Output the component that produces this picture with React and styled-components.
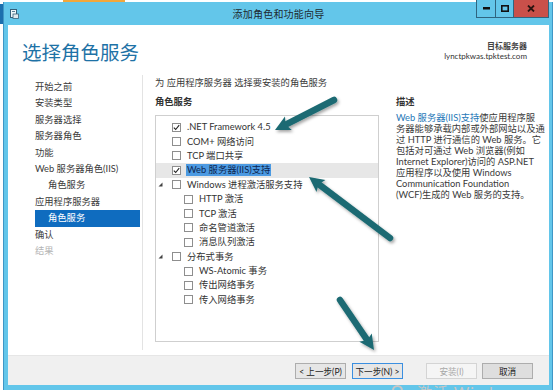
import React from "react";
import styled, { createGlobalStyle } from "styled-components";

const Global = createGlobalStyle`
  html, body { margin: 0; padding: 0; background: #fff; }
  body { overflow: hidden; }
`;

const FONT = `Lato, "Noto Sans CJK SC", sans-serif`;

const Page = styled.div`
  position: relative;
  width: 554px;
  height: 390px;
  overflow: hidden;
  background: #fff;
  display: flex;
  flex-direction: column;
  font-family: ${FONT};
  color: #333;
`;

const TopStrip = styled.div`
  height: 2px;
  display: flex;
  flex-shrink: 0;
`;

const OrangeBit = styled.div`
  margin-left: 63px;
  width: 62px;
  background: #f2a73c;
`;

const Body = styled.div`
  flex: 1;
  display: flex;
`;

const LeftEdge = styled.div`
  width: 3px;
  display: flex;
  flex-direction: column;
`;

const EdgeBlue = styled.div`
  margin-top: 2px;
  height: 20px;
  background: #1c6fae;
`;

const Window = styled.div`
  width: 550px;
  box-sizing: border-box;
  display: flex;
  flex-direction: column;
  background: #63c6ea;
  border-left: 1px solid #3f97c6;
  border-right: 1px solid #3f97c6;
  padding: 0 3px 5px 4px;
`;

const TitleBar = styled.div`
  height: 23px;
  display: grid;
  grid-template-columns: 1fr auto 1fr;
  align-items: center;
`;

const TitleIcon = styled.svg`
  margin-left: 2px;
  display: block;
`;

const TitleText = styled.div`
  font-size: 10px;
  color: #1e2a30;
  letter-spacing: 0.2px;
`;

const Controls = styled.div`
  justify-self: end;
  align-self: start;
  margin-top: -2px;
  display: flex;
  height: 17px;
  border: 1px solid #2f6580;
  border-top: none;
`;

const CtrlBtn = styled.div`
  width: ${(p) => p.$w}px;
  background: ${(p) => (p.$close ? "#c9504a" : "#63c6ea")};
  border-left: ${(p) => (p.$first ? "none" : "1px solid #2f6580")};
  display: flex;
  align-items: center;
  justify-content: center;
`;

const Content = styled.div`
  flex: 1;
  background: #fff;
  display: flex;
  flex-direction: column;
`;

const Header = styled.div`
  height: 50px;
  display: flex;
  align-items: center;
  justify-content: space-between;
  padding: 0 22px 0 14px;
`;

const HeaderTitle = styled.div`
  font-size: 19.5px;
  color: #1e72a6;
  margin-top: 3px;
`;

const Target = styled.div`
  text-align: right;
  font-size: 8px;
  line-height: 10px;
  color: #333;
  margin-top: 2px;
`;

const TargetLabel = styled.div`
  font-weight: 700;
  color: #444;
`;

const Main = styled.div`
  flex: 1;
  display: flex;
`;

const Nav = styled.div`
  width: 135px;
  box-sizing: border-box;
  border-right: 1px solid #e3e3e3;
  padding-top: 4px;
  margin-bottom: 5px;
  display: flex;
  flex-direction: column;
`;

const NavItem = styled.div`
  height: 16.4px;
  line-height: 16.4px;
  font-size: 9.3px;
  white-space: nowrap;
  margin-left: 27px;
  margin-right: 2px;
  padding-left: ${(p) => (p.$indent ? 13 : 0)}px;
  color: ${(p) => (p.$active ? "#fff" : p.$muted ? "#b4b4b4" : "#3a3a3a")};
  background: ${(p) => (p.$active ? "#0f6cbf" : "transparent")};
`;

const Panel = styled.div`
  flex: 1;
  padding-left: 12px;
  display: flex;
  flex-direction: column;
`;

const Intro = styled.div`
  height: 14px;
  line-height: 14px;
  margin-top: 1px;
  font-size: 9.3px;
  color: #3a3a3a;
  white-space: nowrap;
`;

const Columns = styled.div`
  flex: 1;
  display: flex;
  margin-top: 5px;
`;

const ListColumn = styled.div`
  width: 224px;
  display: flex;
  flex-direction: column;
`;

const SectionLabel = styled.div`
  height: 14px;
  line-height: 14px;
  font-size: 9.3px;
  font-weight: 700;
  color: #333;
`;

const ListBox = styled.div`
  margin-top: 6px;
  height: 227px;
  box-sizing: border-box;
  border: 1px solid #cfcfcf;
  padding-top: 4px;
`;

const Row = styled.div`
  height: 14.4px;
  display: flex;
  align-items: center;
  background: ${(p) => (p.$selected ? "#e7e7e7" : "transparent")};
  white-space: nowrap;
`;

const Expander = styled.div`
  width: 16px;
  flex-shrink: 0;
  display: flex;
  align-items: center;
  padding-left: 2px;
  box-sizing: border-box;
`;

const Indent = styled.div`
  width: ${(p) => p.$w}px;
  flex-shrink: 0;
`;

const Box = styled.div`
  width: 9px;
  height: 9px;
  box-sizing: border-box;
  border: 1px solid #8e8e8e;
  background: #fff;
  display: flex;
  align-items: center;
  justify-content: center;
  flex-shrink: 0;
`;

const Label = styled.span`
  margin-left: 5px;
  font-size: 9.3px;
  line-height: 12px;
  padding: 0 1px;
  color: ${(p) => (p.$selected ? "#0c2650" : "#333")};
  background: ${(p) => (p.$selected ? "#4c9ae2" : "transparent")};
`;

const DescColumn = styled.div`
  margin-left: 17px;
  width: 142px;
  display: flex;
  flex-direction: column;
`;

const DescText = styled.div`
  margin-top: 3px;
  font-size: 9.3px;
  line-height: 11px;
  color: #3a3a3a;
`;

const DescLine = styled.div`
  white-space: nowrap;
`;

const Link = styled.span`
  color: #1f78b8;
`;

const Footer = styled.div`
  height: 30px;
  box-sizing: border-box;
  background: #f0f0f0;
  border-top: 1px solid #e6e6e6;
  display: flex;
  align-items: center;
  justify-content: flex-end;
  padding-right: 16px;
`;

const Button = styled.div`
  width: 51px;
  height: 16px;
  box-sizing: border-box;
  margin-left: ${(p) => p.$gap}px;
  margin-top: 1px;
  border: 1px solid ${(p) => (p.$default ? "#3b8fe0" : p.$disabled ? "#d4d4d4" : "#adadad")};
  background: ${(p) => (p.$disabled ? "#f5f5f5" : p.$cancel ? "#dedede" : "#e6e6e6")};
  color: ${(p) => (p.$disabled ? "#a8a8a8" : "#222")};
  font-size: 8.6px;
  display: flex;
  align-items: center;
  justify-content: center;
  white-space: nowrap;
`;

const Overlay = styled.svg`
  position: absolute;
  left: 0;
  top: 0;
  pointer-events: none;
`;

const Watermark = styled.div`
  position: absolute;
  left: 417px;
  top: 381px;
  font-size: 15px;
  color: #c6c6c6;
  white-space: nowrap;
  letter-spacing: 1px;
`;

const WatermarkRing = styled.div`
  position: absolute;
  left: 392px;
  top: 385px;
  width: 11px;
  height: 11px;
  border: 2px solid #c6c6c6;
  border-radius: 50%;
  box-sizing: border-box;
`;

const Check = () => (
  <svg width="7" height="7" viewBox="0 0 7 7">
    <path d="M0.8 3.6 L2.7 5.5 L6.2 1.2" fill="none" stroke="#222" strokeWidth="1.1" />
  </svg>
);

const Tri = () => (
  <svg width="5" height="5" viewBox="0 0 5 5" style={{ display: "block" }}>
    <polygon points="4.5,0.5 4.5,4.5 0.5,4.5" fill="#444" />
  </svg>
);

const rows = [
  { label: ".NET Framework 4.5", level: 0, checked: true },
  { label: "COM+ 网络访问", level: 0 },
  { label: "TCP 端口共享", level: 0 },
  { label: "Web 服务器(IIS)支持", level: 0, checked: true, selected: true },
  { label: "Windows 进程激活服务支持", level: 0, expand: true },
  { label: "HTTP 激活", level: 1 },
  { label: "TCP 激活", level: 1 },
  { label: "命名管道激活", level: 1 },
  { label: "消息队列激活", level: 1 },
  { label: "分布式事务", level: 0, expand: true },
  { label: "WS-Atomic 事务", level: 1 },
  { label: "传出网络事务", level: 1 },
  { label: "传入网络事务", level: 1 },
];

const navItems = [
  { t: "开始之前" },
  { t: "安装类型" },
  { t: "服务器选择" },
  { t: "服务器角色" },
  { t: "功能" },
  { t: "Web 服务器角色(IIS)" },
  { t: "角色服务", indent: true },
  { t: "应用程序服务器" },
  { t: "角色服务", indent: true, active: true },
  { t: "确认" },
  { t: "结果", muted: true },
];

function Arrow({ x1, y1, x2, y2 }) {
  const dx = x2 - x1;
  const dy = y2 - y1;
  const len = Math.hypot(dx, dy);
  const ux = dx / len;
  const uy = dy / len;
  const hl = 15;
  const hw = 7.5;
  const bx = x2 - ux * hl;
  const by = y2 - uy * hl;
  const px = -uy;
  const py = ux;
  const pts = `${x2},${y2} ${bx + px * hw},${by + py * hw} ${bx + ux * 3},${by + uy * 3} ${bx - px * hw},${by - py * hw}`;
  return (
    <g filter="url(#sh)">
      <line x1={x1} y1={y1} x2={bx + ux * 3} y2={by + uy * 3} stroke="#1d6b73" strokeWidth="6.5" strokeLinecap="round" />
      <polygon points={pts} fill="#1d6b73" />
    </g>
  );
}

export default function App() {
  return (
    <>
      <Global />
      <Page>
        <TopStrip>
          <OrangeBit />
        </TopStrip>
        <Body>
          <LeftEdge>
            <EdgeBlue />
          </LeftEdge>
          <Window>
            <TitleBar>
              <TitleIcon width="9" height="10" viewBox="0 0 9 10">
                <rect x="0.5" y="0.5" width="6" height="8" fill="#eef6fa" stroke="#35607a" />
                <rect x="3" y="5" width="5.5" height="4.5" fill="#dfe9ee" stroke="#35607a" strokeWidth="0.8" />
                <line x1="2" y1="2.5" x2="5" y2="2.5" stroke="#35607a" strokeWidth="0.8" />
              </TitleIcon>
              <TitleText>添加角色和功能向导</TitleText>
              <Controls>
                <CtrlBtn $w={18} $first>
                  <svg width="7" height="3" viewBox="0 0 7 3"><rect width="7" height="2.5" fill="#111" /></svg>
                </CtrlBtn>
                <CtrlBtn $w={17}>
                  <svg width="8" height="7" viewBox="0 0 8 7"><rect x="0.8" y="0.8" width="6.4" height="5.4" fill="none" stroke="#111" strokeWidth="1.6" /></svg>
                </CtrlBtn>
                <CtrlBtn $w={34} $close>
                  <svg width="8" height="7" viewBox="0 0 8 7"><path d="M1 0.5 L7 6.5 M7 0.5 L1 6.5" stroke="#2a1410" strokeWidth="1.8" /></svg>
                </CtrlBtn>
              </Controls>
            </TitleBar>
            <Content>
              <Header>
                <HeaderTitle>选择角色服务</HeaderTitle>
                <Target>
                  <TargetLabel>目标服务器</TargetLabel>
                  <div>lynctpkwas.tpktest.com</div>
                </Target>
              </Header>
              <Main>
                <Nav>
                  {navItems.map((n, i) => (
                    <NavItem key={i} $indent={n.indent} $active={n.active} $muted={n.muted}>
                      {n.t}
                    </NavItem>
                  ))}
                </Nav>
                <Panel>
                  <Intro>为 应用程序服务器 选择要安装的角色服务</Intro>
                  <Columns>
                    <ListColumn>
                      <SectionLabel>角色服务</SectionLabel>
                      <ListBox>
                        {rows.map((r, i) => (
                          <Row key={i} $selected={r.selected}>
                            <Expander>{r.expand ? <Tri /> : null}</Expander>
                            <Indent $w={r.level ? 12 : 0} />
                            <Box>{r.checked ? <Check /> : null}</Box>
                            <Label $selected={r.selected}>{r.label}</Label>
                          </Row>
                        ))}
                      </ListBox>
                    </ListColumn>
                    <DescColumn>
                      <SectionLabel>描述</SectionLabel>
                      <DescText>
                        <DescLine>
                          <Link>Web 服务器(IIS)支持</Link>使应用程序服
                        </DescLine>
                        <DescLine>务器能够承载内部或外部网站以及通</DescLine>
                        <DescLine>过 HTTP 进行通信的 Web 服务。它</DescLine>
                        <DescLine>包括对可通过 Web 浏览器(例如</DescLine>
                        <DescLine>Internet Explorer)访问的 ASP.NET</DescLine>
                        <DescLine>应用程序以及使用 Windows</DescLine>
                        <DescLine>Communication Foundation</DescLine>
                        <DescLine>(WCF)生成的 Web 服务的支持。</DescLine>
                      </DescText>
                    </DescColumn>
                  </Columns>
                </Panel>
              </Main>
              <Footer>
                <Button $gap={0}>&lt; 上一步(P)</Button>
                <Button $gap={6} $default>下一步(N) &gt;</Button>
                <Button $gap={23} $disabled>安装(I)</Button>
                <Button $gap={5} $cancel>取消</Button>
              </Footer>
            </Content>
          </Window>
        </Body>
        <WatermarkRing />
        <Watermark>激活 Windows</Watermark>
        <Overlay width="554" height="390" viewBox="0 0 554 390">
          <defs>
            <filter id="sh" x="-20%" y="-20%" width="140%" height="140%">
              <feDropShadow dx="1.5" dy="2" stdDeviation="1.5" floodColor="#000" floodOpacity="0.35" />
            </filter>
          </defs>
          <Arrow x1={334} y1={100} x2={275} y2={130} />
          <Arrow x1={390} y1={238} x2={309} y2={177} />
          <Arrow x1={340} y1={300} x2={374} y2={350} />
        </Overlay>
      </Page>
    </>
  );
}
